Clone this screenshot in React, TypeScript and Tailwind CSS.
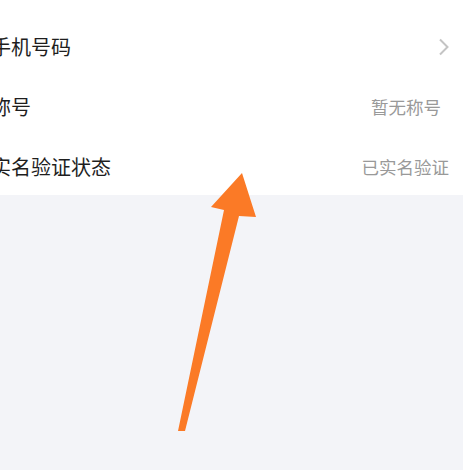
import React from "react";

const rows = [
  { label: "手机号码", value: null, chevron: true, inset: 0 },
  { label: "称号", value: "暂无称号", chevron: false, inset: 8 },
  { label: "实名验证状态", value: "已实名验证", chevron: false, inset: 0 },
];

function Row({
  label,
  value,
  chevron,
  inset,
}: {
  label: string;
  value: string | null;
  chevron: boolean;
  inset: number;
}) {
  return (
    <div className="flex h-[60px] items-center justify-between pr-[14px]">
      <span className="-ml-[9px] text-[20px] leading-none text-[#1e1e1e]">
        {label}
      </span>
      {value && (
        <span
          className={
            inset
              ? "mr-[8px] text-[17.5px] leading-none text-[#999999]"
              : "text-[17.5px] leading-none text-[#999999]"
          }
        >
          {value}
        </span>
      )}
      {chevron && (
        <svg width="12" height="18" viewBox="0 0 12 18" className="mr-[-1px]">
          <path
            d="M2 1.5 L9.5 9 L2 16.5"
            fill="none"
            stroke="#c4c4c4"
            strokeWidth="2"
          />
        </svg>
      )}
    </div>
  );
}

export default function App() {
  return (
    <div
      className="relative h-[470px] w-[463px] overflow-hidden bg-[#f3f4f8]"
      style={{ fontFamily: '"Noto Sans CJK SC", "Noto Sans", sans-serif' }}
    >
      <div className="h-[195px] overflow-hidden bg-white pt-[17px]">
        {rows.map((r) => (
          <Row key={r.label} {...r} />
        ))}
      </div>
      <svg
        className="absolute left-0 top-0"
        width="463"
        height="470"
        viewBox="0 0 463 470"
      >
        <polygon
          points="242,173 256,217 239,216 185,431 178,431 224,210 211,207"
          fill="#fb7a26"
        />
      </svg>
    </div>
  );
}
